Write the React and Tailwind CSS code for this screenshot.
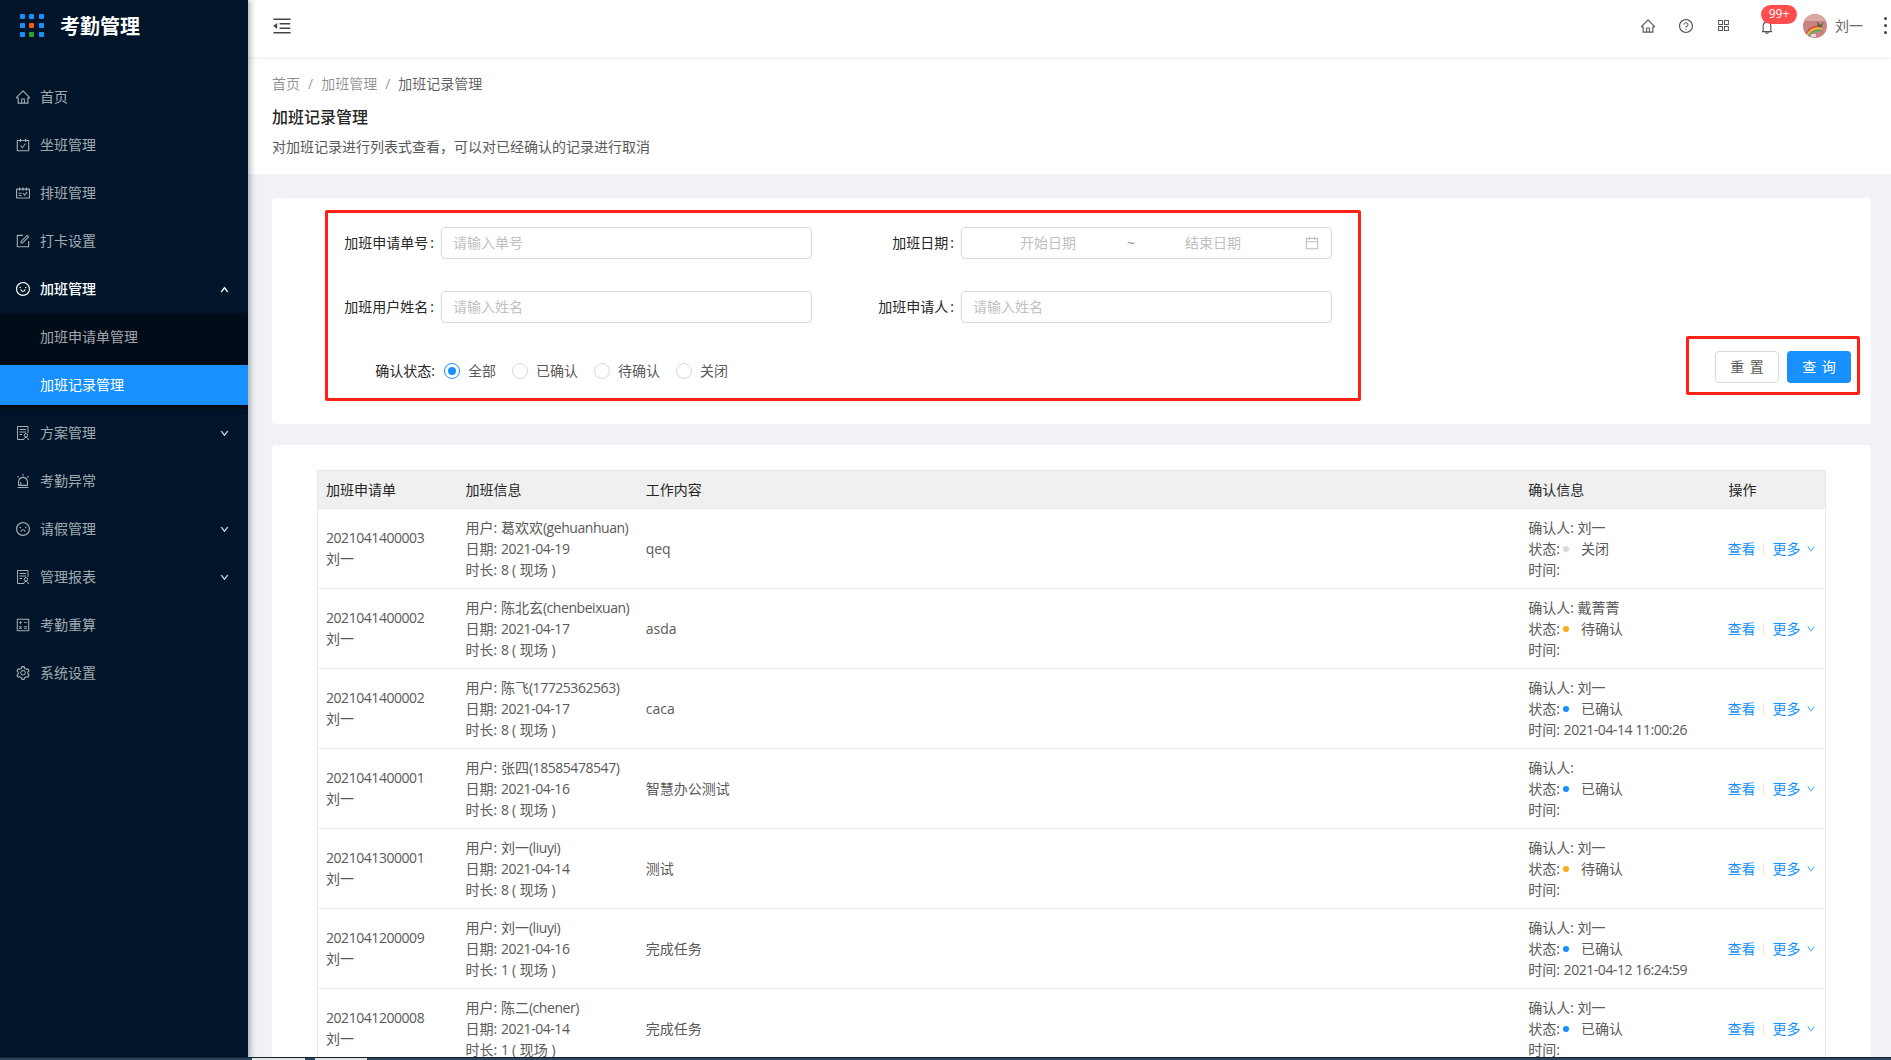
import React from "react";
import {
  AiOutlineHome,
  AiOutlineCarryOut,
  AiOutlineSchedule,
  AiOutlineForm,
  AiOutlineSmile,
  AiOutlineAlert,
  AiOutlineFrown,
  AiOutlineCalculator,
  AiOutlineSetting,
  AiOutlineMenuFold,
  AiOutlineQuestionCircle,
  AiOutlineAppstore,
  AiOutlineBell,
  AiOutlineCalendar,
  AiOutlineDown,
  AiOutlineUp,
} from "react-icons/ai";

const rows = [
  { no: "2021041400003", user: "葛欢欢", acct: "(gehuanhuan)", date: "2021-04-19", hours: "8", work: "qeq", by: "刘一", status: "关闭", dot: "bg-[#d9d9d9]", time: "" },
  { no: "2021041400002", user: "陈北玄", acct: "(chenbeixuan)", date: "2021-04-17", hours: "8", work: "asda", by: "戴菁菁", status: "待确认", dot: "bg-[#faad14]", time: "" },
  { no: "2021041400002", user: "陈飞", acct: "(17725362563)", date: "2021-04-17", hours: "8", work: "caca", by: "刘一", status: "已确认", dot: "bg-[#1890ff]", time: "2021-04-14 11:00:26" },
  { no: "2021041400001", user: "张四", acct: "(18585478547)", date: "2021-04-16", hours: "8", work: "智慧办公测试", by: "", status: "已确认", dot: "bg-[#1890ff]", time: "" },
  { no: "2021041300001", user: "刘一", acct: "(liuyi)", date: "2021-04-14", hours: "8", work: "测试", by: "刘一", status: "待确认", dot: "bg-[#faad14]", time: "" },
  { no: "2021041200009", user: "刘一", acct: "(liuyi)", date: "2021-04-16", hours: "1", work: "完成任务", by: "刘一", status: "已确认", dot: "bg-[#1890ff]", time: "2021-04-12 16:24:59" },
  { no: "2021041200008", user: "陈二", acct: "(chener)", date: "2021-04-14", hours: "1", work: "完成任务", by: "刘一", status: "已确认", dot: "bg-[#1890ff]", time: "" },
];

// Latin text in the reference runs a little narrower than Open Sans at 14px
function Latin({ children }) {
  return <span className="tracking-[-0.45px]">{children}</span>;
}

// document with a small person in the corner, used by two menu items
function DocPersonIcon({ className }) {
  return (
    <svg viewBox="0 0 16 16" fill="none" stroke="currentColor" strokeWidth="1" className={className}>
      <path d="M8.5 14.5H2.5V1.5H13V8" />
      <path d="M4.5 4.5H11M4.5 7H11M4.5 9.5H7" />
      <circle cx="11" cy="10.3" r="1.7" />
      <path d="M8.6 15C8.9 13.2 9.8 12.4 11 12.4S13.1 13.2 13.4 15" />
    </svg>
  );
}

function MenuItem({ icon: Icon, label, arrow, active }) {
  return (
    <div className={`flex items-center h-10 mb-2 pl-[15px] pr-4 ${active ? "text-white" : "text-[rgba(255,255,255,0.65)]"}`}>
      <Icon className="w-4 h-4 mr-[9px] shrink-0" />
      <span className="flex-1">{label}</span>
      {arrow === "down" && <AiOutlineDown className="w-[9px] h-[9px] mr-[3px] stroke-[100]" />}
    </div>
  );
}

function Sidebar() {
  const dots = ["#1890ff", "#1890ff", "#1890ff", "#1890ff", "#fa5a0a", "#1890ff", "#1890ff", "#2aa52a", "#1890ff"];
  return (
    <aside className="w-[248px] shrink-0 h-full bg-[#001529] text-sm shadow-[2px_0_6px_rgba(0,21,41,0.35)] z-10">
      <div className="flex items-center h-[54px] pl-5">
        <div className="grid grid-cols-3 gap-[4px] w-[24px] -mt-[4px]">
          {dots.map((c, i) => (
            <span key={i} className="w-[5px] h-[5px] rounded-[1px] mr-[-1px]" style={{ backgroundColor: c }} />
          ))}
        </div>
        <div className="ml-[16px] text-[20px] font-bold text-white">考勤管理</div>
      </div>
      <nav className="pt-[23px]">
        <MenuItem icon={AiOutlineHome} label="首页" />
        <MenuItem icon={AiOutlineCarryOut} label="坐班管理" />
        <MenuItem icon={AiOutlineSchedule} label="排班管理" />
        <MenuItem icon={AiOutlineForm} label="打卡设置" />
        <div className="flex items-center h-10 pl-[15px] pr-4 text-white font-medium">
          <AiOutlineSmile className="w-4 h-4 mr-[9px] shrink-0" />
          <span className="flex-1">加班管理</span>
          <AiOutlineUp className="w-[9px] h-[9px] mr-[3px] stroke-[100]" />
        </div>
        <div className="bg-[#000c17] mt-1 mb-1 py-1">
          <div className="h-10 mb-2 pl-10 flex items-center text-[rgba(255,255,255,0.65)]">加班申请单管理</div>
          <div className="h-10 pl-10 flex items-center bg-[#1890ff] text-white">加班记录管理</div>
        </div>
        <MenuItem icon={DocPersonIcon} label="方案管理" arrow="down" />
        <MenuItem icon={AiOutlineAlert} label="考勤异常" />
        <MenuItem icon={AiOutlineFrown} label="请假管理" arrow="down" />
        <MenuItem icon={DocPersonIcon} label="管理报表" arrow="down" />
        <MenuItem icon={AiOutlineCalculator} label="考勤重算" />
        <MenuItem icon={AiOutlineSetting} label="系统设置" />
      </nav>
    </aside>
  );
}

function Avatar() {
  return (
    <svg viewBox="0 0 24 24" className="w-6 h-6 rounded-full">
      <rect width="24" height="24" fill="#c98484" />
      <rect width="24" height="7" fill="#d9a8a0" />
      <path d="M3 20 Q9 10 19 13" fill="none" stroke="#e8443a" strokeWidth="1.4" />
      <path d="M4 21 Q10 12 19 15" fill="none" stroke="#f2c230" strokeWidth="1.4" />
      <path d="M5 23 Q11 14 19 17" fill="none" stroke="#53b04a" strokeWidth="1.4" />
      <path d="M14 7 L17 11 L21 8 L18 13 L15 13 Z" fill="#4a6a35" />
      <rect x="8" y="20" width="5" height="3" fill="#e6cfe0" />
    </svg>
  );
}

function Topbar() {
  return (
    <header className="h-[57px] shrink-0 bg-white flex items-center shadow-[0_1px_4px_rgba(0,21,41,0.08)] z-[1] pb-[6px]">
      <AiOutlineMenuFold className="w-[22px] h-[22px] ml-[23px] text-[#444]" />
      <div className="ml-auto flex items-center text-[#555]">
        <AiOutlineHome className="w-4 h-4" />
        <AiOutlineQuestionCircle className="w-4 h-4 ml-[22px]" />
        <AiOutlineAppstore className="w-[15px] h-[15px] ml-[22px]" />
        <div className="relative ml-[28px] mt-[2px]">
          <AiOutlineBell className="w-4 h-4" />
          <span className="absolute left-[2px] top-[-14px] h-[19px] w-[36px] rounded-full bg-[#ff4d4f] text-white text-xs flex items-center justify-center">
            99+
          </span>
        </div>
        <div className="ml-[28px]"><Avatar /></div>
        <span className="ml-2 text-sm text-[#666]">刘一</span>
        <span className="ml-[21px] mr-[4px] flex flex-col gap-[4px]">
          <i className="w-[3px] h-[3px] rounded-full bg-[#444]" />
          <i className="w-[3px] h-[3px] rounded-full bg-[#444]" />
          <i className="w-[3px] h-[3px] rounded-full bg-[#444]" />
        </span>
      </div>
    </header>
  );
}

function PageTitle() {
  return (
    <section className="bg-white h-[117px] pl-6 pt-[17px] shrink-0 text-sm">
      <div className="flex items-center h-[20px] text-[rgba(0,0,0,0.45)]">
        <span>首页</span>
        <span className="mx-2">/</span>
        <span>加班管理</span>
        <span className="mx-2">/</span>
        <span className="text-[rgba(0,0,0,0.65)]">加班记录管理</span>
      </div>
      <h1 className="mt-[13px] text-base leading-[20px] font-medium text-[#262626]">加班记录管理</h1>
      <p className="mt-[10px] leading-[20px] text-[#595959]">对加班记录进行列表式查看，可以对已经确认的记录进行取消</p>
    </section>
  );
}

function Field({ label, labelWidth, children }) {
  return (
    <div className="flex items-center h-8">
      <label className="text-right text-[#262626] shrink-0" style={{ width: labelWidth }}>
        {label}<span className="ml-[2px]">:</span>
      </label>
      <div className="ml-[7px]">{children}</div>
    </div>
  );
}

function TextInput({ width, placeholder }) {
  return (
    <div className="h-8 border border-[#d9d9d9] rounded-[4px] px-[11px] flex items-center text-[#bfbfbf]" style={{ width }}>
      {placeholder}
    </div>
  );
}

function Radio({ label, checked, className }) {
  return (
    <div className={`flex items-center ${className}`}>
      <span className={`w-4 h-4 rounded-full border flex items-center justify-center ${checked ? "border-[#1890ff]" : "border-[#d9d9d9]"}`}>
        {checked && <span className="w-2 h-2 rounded-full bg-[#1890ff]" />}
      </span>
      <span className="ml-2 text-[#595959]">{label}</span>
    </div>
  );
}

function SearchCard() {
  return (
    <section className="bg-white rounded-[4px] mr-5 ml-6 mt-6 h-[226px] shrink-0 flex pl-[53px] pr-[11px] pt-[12px] text-sm">
      <div className="w-[1036px] h-[191px] border-[3px] border-[#ff2115] rounded-[2px] pt-[14px]">
        <div className="grid grid-cols-[484px_1fr] gap-y-8">
          <Field label="加班申请单号" labelWidth={106}><TextInput width={371} placeholder="请输入单号" /></Field>
          <Field label="加班日期" labelWidth={142}>
            <div className="w-[371px] h-8 border border-[#d9d9d9] rounded-[4px] flex items-center text-[#bfbfbf]">
              <span className="w-[150px] pl-[22px] text-center">开始日期</span>
              <span className="w-[38px] text-center text-[#8c8c8c]">~</span>
              <span className="w-[126px] text-center">结束日期</span>
              <AiOutlineCalendar className="w-4 h-4 ml-[28px]" />
            </div>
          </Field>
          <Field label="加班用户姓名" labelWidth={106}><TextInput width={371} placeholder="请输入姓名" /></Field>
          <Field label="加班申请人" labelWidth={142}><TextInput width={371} placeholder="请输入姓名" /></Field>
          <div className="col-span-2 flex items-center h-8">
            <span className="w-[107px] text-right text-[#262626] shrink-0">确认状态:</span>
            <Radio label="全部" checked className="ml-[9px]" />
            <Radio label="已确认" className="ml-4" />
            <Radio label="待确认" className="ml-4" />
            <Radio label="关闭" className="ml-4" />
          </div>
        </div>
      </div>
      <div className="ml-auto mt-[126px] w-[174px] h-[59px] border-[3px] border-[#ff2115] rounded-[2px] flex items-start justify-end gap-2 pt-[12px] pr-[6px]">
        <button className="w-16 h-8 border border-[#d9d9d9] rounded-[4px] text-[#595959] bg-white [word-spacing:2px]">重 置</button>
        <button className="w-16 h-8 rounded-[4px] text-white bg-[#1890ff] [word-spacing:2px]">查 询</button>
      </div>
    </section>
  );
}

function RecordRow({ row }) {
  return (
    <tr className="h-20 border-b border-[#e8e8e8]">
      <td className="px-2 pb-[2px] align-middle">
        <div><Latin>{row.no}</Latin></div>
        <div>刘一</div>
      </td>
      <td className="px-2 align-middle">
        <div>用户: {row.user}<Latin>{row.acct}</Latin></div>
        <div>日期: <Latin>{row.date}</Latin></div>
        <div>时长: <Latin>{row.hours}</Latin> ( 现场 )</div>
      </td>
      <td className="px-2 align-middle">{row.work}</td>
      <td className="px-2 align-middle">
        <div>确认人: {row.by}</div>
        <div className="flex items-center">
          状态:
          <span className={`w-[6px] h-[6px] rounded-full ml-[3px] mr-[12px] ${row.dot}`} />
          {row.status}
        </div>
        <div>时间: <Latin>{row.time}</Latin></div>
      </td>
      <td className="pl-[7px] pr-2 align-middle">
        <div className="flex items-center text-[#1890ff] whitespace-nowrap">
          查看
          <span className="w-px h-[14px] bg-[#e8e8e8] mx-2" />
          更多
          <AiOutlineDown className="w-[10px] h-[10px] ml-[6px] mt-[1px] shrink-0" />
        </div>
      </td>
    </tr>
  );
}

function RecordTable() {
  return (
    <section className="bg-white rounded-[4px] mr-5 ml-6 mt-[21px] flex-1 min-h-0 overflow-hidden pl-[45px] pr-[45px] pt-[25px]">
      <table className="w-[1509px] table-fixed border-collapse border border-[#e8e8e8] text-sm leading-[21px] text-[#595959]">
        <colgroup>
          <col className="w-[140px]" />
          <col className="w-[180px]" />
          <col className="w-[882px]" />
          <col className="w-[200px]" />
          <col className="w-[105px]" />
        </colgroup>
        <thead>
          <tr className="h-[38px] bg-[#f0f0f0] border-b border-[#e8e8e8] text-left text-[#262626]">
            <th className="px-2 font-normal">加班申请单</th>
            <th className="px-2 font-normal">加班信息</th>
            <th className="px-2 font-normal">工作内容</th>
            <th className="px-2 font-normal">确认信息</th>
            <th className="px-2 font-normal">操作</th>
          </tr>
        </thead>
        <tbody>
          {rows.map((row, i) => (
            <RecordRow key={i} row={row} />
          ))}
        </tbody>
      </table>
    </section>
  );
}

export default function App() {
  return (
    <div className="relative w-[1891px] h-[1060px] overflow-hidden flex bg-[#f0f2f5] font-['Open_Sans','Noto_Sans_CJK_SC',sans-serif]">
      <Sidebar />
      <main className="flex-1 min-w-0 flex flex-col">
        <Topbar />
        <PageTitle />
        <SearchCard />
        <RecordTable />
      </main>
      {/* strip of the desktop taskbar cut off at the bottom of the capture */}
      <div className="absolute left-0 right-0 bottom-0 h-[3px] bg-[#2c4560] border-t border-[#14202c] z-20 flex pl-[252px]">
        <span className="w-[53px] bg-[#dfe3e6]" />
        <span className="w-[52px] ml-[10px] bg-[#dfe3e6]" />
      </div>
    </div>
  );
}
